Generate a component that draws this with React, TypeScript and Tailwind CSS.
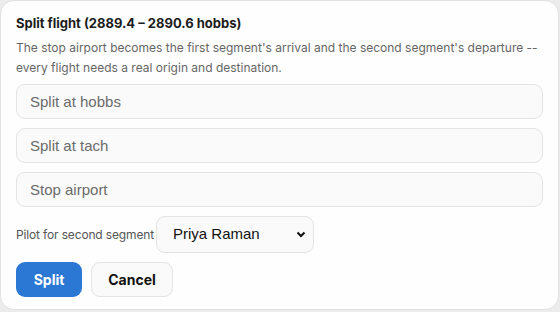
import React from "react";

export default function App() {
  return (
    <div className="min-h-[312px] w-[560px] bg-[#ececec] font-['Inter',sans-serif]">
      <div className="w-[559px] h-[310px] rounded-[14px] border border-[#e2e2e2] bg-[#fefefe] px-[15px] pt-[13px]">
        <h2 className="text-[13px] font-bold leading-[18px] text-[#1c1c1c]">
          Split flight (2889.4 – 2890.6 hobbs)
        </h2>
        <p className="mt-[6px] text-[12px] leading-[20px] text-[#666]">
          The stop airport becomes the first segment's arrival and the second segment's departure --
          every flight needs a real origin and destination.
        </p>
        <div className="mt-[6px] flex flex-col gap-[9px]">
          <input
            placeholder="Split at hobbs"
            className="h-[35px] w-full rounded-[9px] border border-[#e3e3e3] bg-[#fafafa] px-[13px] font-['Liberation_Sans',sans-serif] text-[15px] placeholder:text-[#6b6b6b] outline-none"
          />
          <input
            placeholder="Split at tach"
            className="h-[35px] w-full rounded-[9px] border border-[#e3e3e3] bg-[#fafafa] px-[13px] font-['Liberation_Sans',sans-serif] text-[15px] placeholder:text-[#6b6b6b] outline-none"
          />
          <input
            placeholder="Stop airport"
            className="h-[35px] w-full rounded-[9px] border border-[#e3e3e3] bg-[#fafafa] px-[13px] font-['Liberation_Sans',sans-serif] text-[15px] placeholder:text-[#6b6b6b] outline-none"
          />
        </div>
        <div className="mt-[9px] flex items-center">
          <label className="w-[140px] shrink-0 whitespace-nowrap text-[12px] tracking-[-0.15px] text-[#555]">
            Pilot for second segment
          </label>
          <div className="relative">
            <select className="h-[37px] w-[158px] appearance-none rounded-[9px] border border-[#e3e3e3] bg-[#fafafa] pl-4 font-['Liberation_Sans',sans-serif] text-[15px] text-[#111] outline-none">
              <option>Priya Raman</option>
            </select>
            <svg
              className="pointer-events-none absolute right-[8px] top-[15px]"
              width="10"
              height="7"
              viewBox="0 0 10 7"
            >
              <path d="M1.5 1.5 L5 5 L8.5 1.5" fill="none" stroke="#111" strokeWidth="2" />
            </svg>
          </div>
        </div>
        <div className="mt-[9px] flex gap-[9px]">
          <button className="h-[35px] w-[66px] rounded-[9px] bg-[#2a77d4] text-[14px] font-bold text-white">
            Split
          </button>
          <button className="h-[35px] w-[82px] rounded-[9px] border border-[#e3e3e3] bg-[#fafafa] text-[14px] font-bold text-[#111]">
            Cancel
          </button>
        </div>
      </div>
    </div>
  );
}
